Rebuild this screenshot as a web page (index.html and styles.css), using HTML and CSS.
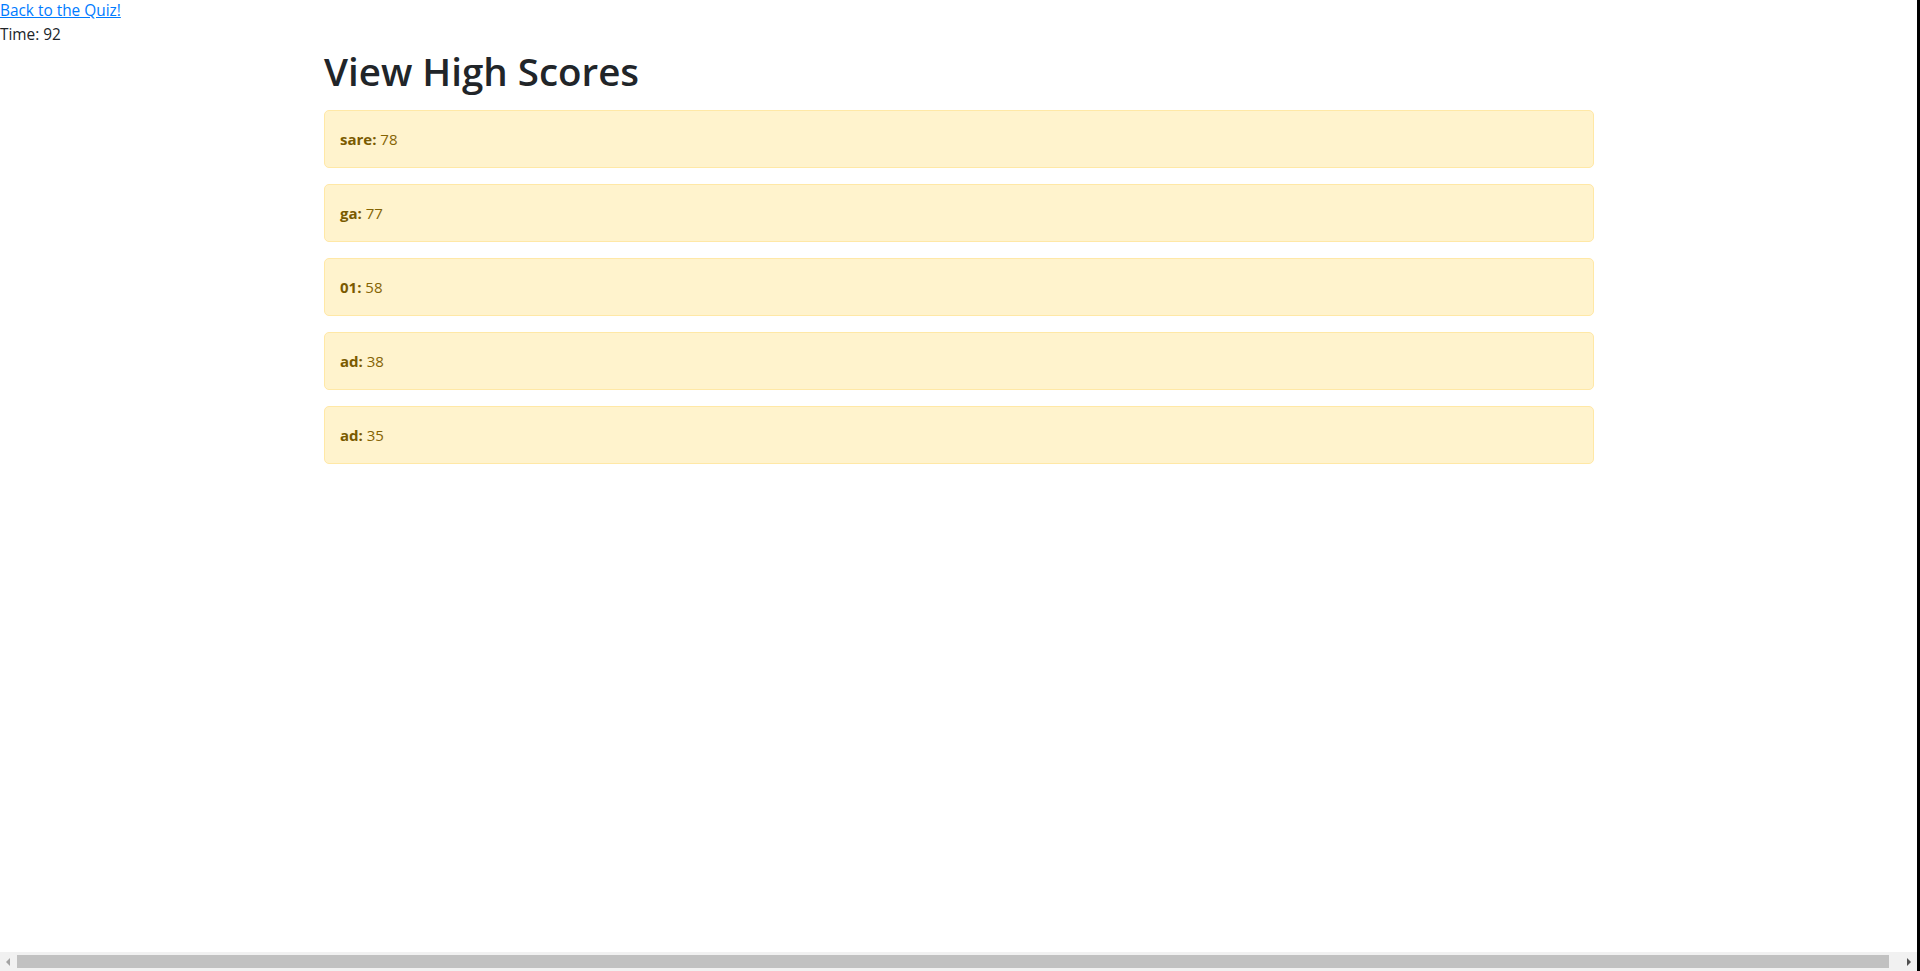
FILE: index.html
```html
<!DOCTYPE html>
<html lang="en">
<head>
<meta charset="utf-8">
<title>View High Scores</title>
<link rel="stylesheet" href="styles.css">
</head>
<body>
<div class="top">
  <a class="back" href="#">Back to the Quiz!</a>
  <div class="time">Time: 92</div>
</div>
<main class="container">
  <h1 class="title">View High Scores</h1>
  <ul class="scores">
    <li class="alert"><strong>sare:</strong> 78</li>
    <li class="alert"><strong>ga:</strong> 77</li>
    <li class="alert"><strong>01:</strong> 58</li>
    <li class="alert"><strong>ad:</strong> 38</li>
    <li class="alert"><strong>ad:</strong> 35</li>
  </ul>
</main>
<div class="hscroll">
  <span class="arrow left"></span>
  <span class="thumb"></span>
  <span class="arrow right"></span>
</div>
<div class="edge"></div>
</body>
</html>
```
FILE: styles.css
```css
html, body {
  margin: 0;
  padding: 0;
  background: #fff;
}
body {
  font-family: "Open Sans", "Noto Sans", sans-serif;
  font-size: 15px;
  line-height: 24px;
  color: #212529;
}
.top {
  display: flex;
  flex-direction: column;
  align-items: flex-start;
  font-size: 15.4px;
  line-height: 22px;
}
.back {
  color: #007bff;
  text-decoration: underline;
}
.time {
  color: #212529;
  margin-top: 2px;
}
.container {
  width: 1270px;
  margin-left: 324px;
}
.title {
  margin: 1px 0 15px;
  font-size: 38.5px;
  line-height: 48px;
  font-weight: 600;
  color: #212529;
}
.scores {
  list-style: none;
  margin: 0;
  padding: 0;
  display: flex;
  flex-direction: column;
  gap: 16px;
}
.alert {
  background: #fff3cd;
  border: 1px solid #ffe8a6;
  border-radius: 5px;
  color: #856404;
  padding: 16px 15px;
  line-height: 24px;
}
.alert strong {
  font-weight: 700;
  color: #7a5a00;
}
.hscroll {
  position: fixed;
  left: 0;
  right: 3px;
  bottom: 0;
  height: 19px;
  background: #f1f1f1;
  display: flex;
  align-items: center;
}
.thumb {
  flex: 1;
  height: 13px;
  background: #c1c1c1;
}
.arrow {
  width: 17px;
  height: 17px;
  position: relative;
}
.arrow.left::before,
.arrow.right::before {
  content: "";
  position: absolute;
  top: 5px;
  border-top: 4px solid transparent;
  border-bottom: 4px solid transparent;
}
.arrow.left::before {
  left: 6px;
  border-right: 4px solid #a3a3a3;
}
.arrow.right::before {
  left: 18px;
  border-left: 4px solid #505050;
}
.arrow.right {
  width: 28px;
}
.edge {
  position: fixed;
  top: 0;
  right: 0;
  width: 3px;
  height: 100%;
  background: #000;
}
```
